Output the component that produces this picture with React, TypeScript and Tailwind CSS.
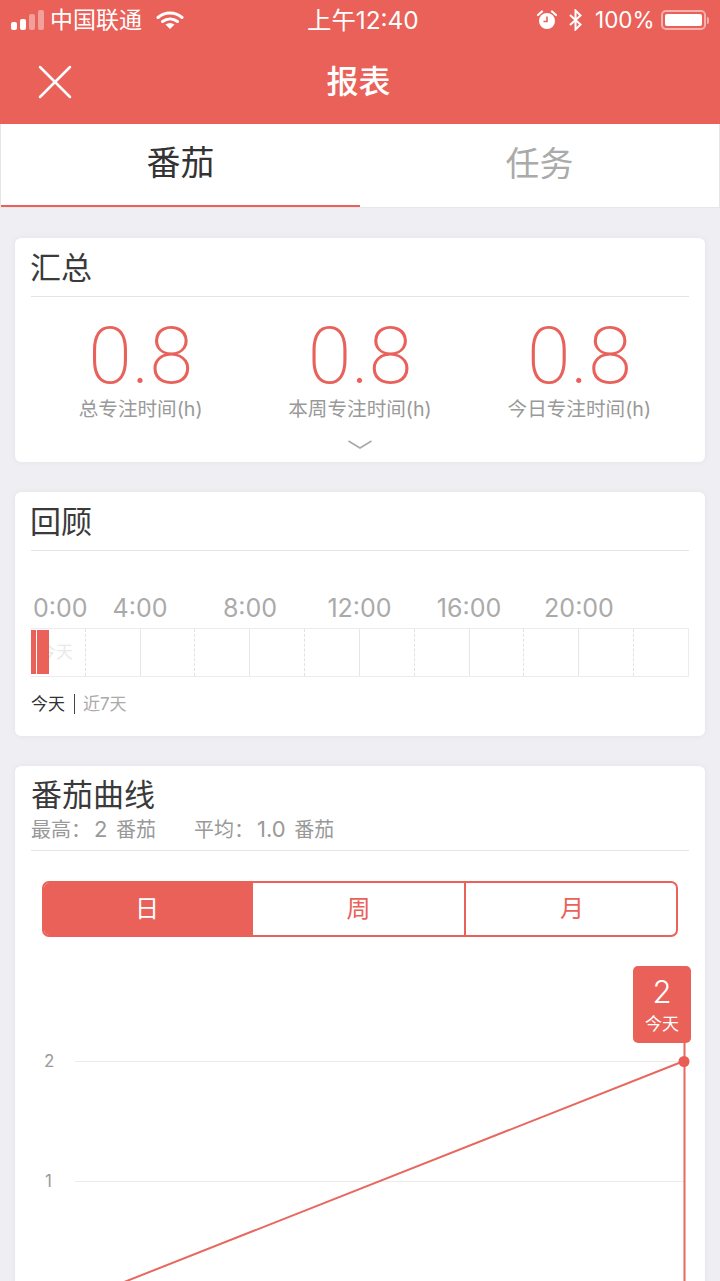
import { X } from "lucide-react";

const cjk = "font-['Inter','Noto_Sans_CJK_SC',sans-serif]";

function StatusBar() {
  return (
    <div className="flex h-[40px] items-center text-white">
      <div className="ml-[11px] flex h-[20px] items-end gap-[3px] mt-[-1px]">
        <div className="h-[8px] w-[6px] rounded-[2px] bg-white" />
        <div className="h-[11px] w-[6px] rounded-[2px] bg-white" />
        <div className="h-[16px] w-[6px] rounded-[2px] bg-white/40" />
        <div className="h-[20px] w-[6px] rounded-[2px] bg-white/40" />
      </div>
      <span className="ml-[6px] text-[23px] leading-none">中国联通</span>
      <svg className="ml-[14px]" width="28" height="20" viewBox="0 0 28 20" fill="none">
        <path d="M2 7.5C9 1.5 19 1.5 26 7.5" stroke="#fff" strokeWidth="3" strokeLinecap="round" />
        <path d="M6.5 11.5C11 8 17 8 21.5 11.5" stroke="#fff" strokeWidth="3" strokeLinecap="round" />
        <path d="M9.5 14.5C12.5 12.5 15.5 12.5 18.5 14.5L14 19Z" fill="#fff" />
      </svg>
      <span className="ml-[123px] w-[111px] text-[24.4px] leading-none whitespace-nowrap">上午12:40</span>
      <svg className="ml-[119px]" width="20" height="20" viewBox="0 0 20 20" fill="none">
        <circle cx="10" cy="11" r="8" fill="#fff" />
        <path d="M10 6.5V11.5H6.5" stroke="#ea6159" strokeWidth="1.6" />
        <path d="M1 5L5 1.5M19 5L15 1.5" stroke="#fff" strokeWidth="2.2" strokeLinecap="round" />
      </svg>
      <svg className="ml-[11px]" width="15" height="22" viewBox="0 0 15 22" fill="none">
        <path d="M2 6L12.5 15.5L7.5 20.5V1.5L12.5 6.5L2 16" stroke="#fff" strokeWidth="2" />
      </svg>
      <span className="ml-[12px] text-[22.5px] leading-none">100%</span>
      <div className="ml-[6px] flex h-[20px] w-[45px] items-center rounded-[5px] border-2 border-white/50 p-[2px]">
        <div className="h-full w-full rounded-[2px] bg-white" />
      </div>
      <div className="ml-[1px] h-[7px] w-[2px] rounded-r-full bg-white/50" />
    </div>
  );
}

function CardTitle({ title }: { title: string }) {
  return (
    <div className="flex h-[59px] items-center border-b border-[#e4e4e6] text-[31px] leading-none text-[#3a3a3a]">
      <span className="ml-[-1px]">{title}</span>
    </div>
  );
}

function Card({ children }: { children: React.ReactNode }) {
  return (
    <div className="mx-[15px] rounded-[6px] bg-white px-[16px] shadow-[0_0_6px_rgba(0,0,0,0.05)]">
      {children}
    </div>
  );
}

function Stat({ label }: { label: string }) {
  return (
    <div className="flex flex-col items-center">
      <div className="font-['Roboto'] text-[79px] leading-[70px] font-extralight text-[#e8625b]">0.8</div>
      <div className="mt-[5px] text-[19.6px] leading-[26px] text-[#999999]">{label}</div>
    </div>
  );
}

const cells = ["dashed", "solid", "dashed", "solid", "dashed", "solid", "dashed", "solid", "dashed", "solid", "dashed", "none"];

function Timeline() {
  return (
    <div className="relative mt-[5px] flex h-[49px] border border-l-0 border-[#ececec]">
      {cells.map((c, i) => (
        <div
          key={i}
          className={
            c === "dashed"
              ? "flex-1 border-r border-dashed border-[#e2e2e2]"
              : c === "solid"
                ? "flex-1 border-r border-[#e6e6e6]"
                : "flex-1"
          }
        />
      ))}
      <span className="absolute top-[13px] left-[8px] text-[17px] leading-[20px] text-[#e9e9e9]">今天</span>
      <div className="absolute top-[1px] left-0 h-[44px] w-[5px] bg-[#ea6159]" />
      <div className="absolute top-[1px] left-[6px] h-[44px] w-[12px] bg-[#ea6159]" />
    </div>
  );
}

function Chart() {
  return (
    <div className="relative mx-[-16px] mt-[14px] h-[360px]">
      <svg className="absolute top-0 left-0" width="690" height="360" viewBox="0 0 690 360" fill="none">
        <path d="M60 110.5H669M60 230.5H669" stroke="#ececec" />
        <path d="M61 350L669 110" stroke="#e8675f" strokeWidth="2" />
        <path d="M669.5 85V360" stroke="#e8675f" strokeWidth="2" />
        <circle cx="669" cy="110.5" r="5.5" fill="#ea5d55" />
        <text x="29" y="116" fontSize="17" fill="#9a9a9a">2</text>
        <text x="30" y="236" fontSize="17" fill="#9a9a9a">1</text>
      </svg>
      <div className="absolute top-[15px] left-[618px] flex h-[77px] w-[58px] flex-col items-center rounded-[5px] bg-[#ea6159] text-white">
        <span className="mt-[8px] text-[31px] leading-[36px] font-light">2</span>
        <span className="mt-[3px] text-[17px] leading-[22px]">今天</span>
      </div>
    </div>
  );
}

export default function App() {
  return (
    <div className={`h-[1281px] overflow-hidden bg-[#eeeef3] ${cjk}`}>
      <div className="h-[124px] bg-[#ea6159]">
        <StatusBar />
        <div className="grid h-[83px] grid-cols-3 items-center">
          <X className="ml-[25px] text-white" size={60} strokeWidth={1} />
          <span className="pr-[3px] text-center text-[32px] leading-none font-medium text-white">报表</span>
        </div>
      </div>

      <div className="flex h-[84px] border-x border-b border-[#e6e6e8] bg-white">
        <div className="flex flex-1 items-center justify-center border-b-2 border-[#ea6159] pb-[4px] text-[34px] leading-none text-[#333333]">
          番茄
        </div>
        <div className="flex flex-1 items-center justify-center pb-[4px] text-[34px] leading-none text-[#aaaaaa]">
          任务
        </div>
      </div>

      <div className="mt-[30px] flex flex-col gap-[30px]">
        <Card>
          <CardTitle title="汇总" />
          <div className="grid grid-cols-3 pt-[24px]">
            <Stat label="总专注时间(h)" />
            <Stat label="本周专注时间(h)" />
            <Stat label="今日专注时间(h)" />
          </div>
          <div className="flex h-[40px] items-center justify-center">
            <svg className="mt-[5px]" width="26" height="12" viewBox="0 0 26 12" fill="none">
              <path d="M1.5 2L13 9L24.5 2" stroke="#a8a8a8" strokeWidth="1.5" />
            </svg>
          </div>
        </Card>

        <Card>
          <CardTitle title="回顾" />
          <div className="mt-[42px] flex h-[30px] items-center text-[25px] leading-none whitespace-nowrap text-[#aaaaaa]">
            <span className="w-[54px] pl-[2px]">0:00</span>
            <span className="w-[110px] text-center">4:00</span>
            <span className="w-[110px] text-center">8:00</span>
            <span className="w-[109px] text-center">12:00</span>
            <span className="w-[110px] text-center">16:00</span>
            <span className="w-[110px] text-center">20:00</span>
          </div>
          <Timeline />
          <div className="flex h-[59px] items-center pb-[5px] text-[17px] leading-none">
            <span className="text-[#333333]">今天</span>
            <div className="mr-[8px] ml-[9px] h-[20px] w-px bg-[#444444]" />
            <span className="text-[#aaaaaa]">近7天</span>
          </div>
        </Card>

        <Card>
          <div className="border-b border-[#e4e4e6] pt-[14px] pb-[9px]">
            <div className="text-[31px] leading-[30px] text-[#3a3a3a]">番茄曲线</div>
            <div className="mt-[7px] flex h-[24px] items-center text-[20px] leading-none whitespace-nowrap text-[#999999]">
              <span className="w-[163px]">
                最高：<span className="mr-[3px] ml-[3px] text-[22px] leading-none">2</span> 番茄
              </span>
              <span>
                平均：<span className="mr-[3px] ml-[3px] text-[22px] leading-none">1.0</span> 番茄
              </span>
            </div>
          </div>
          <div className="mx-[11px] mt-[30px] flex h-[56px] overflow-hidden rounded-[7px] border-2 border-[#ea6159] text-[24px] leading-none">
            <div className="flex w-[209px] items-center justify-center bg-[#ea6159] pr-[3px] text-white">日</div>
            <div className="flex w-[213px] items-center justify-center border-r-2 border-[#ea6159] text-[#ea6159]">周</div>
            <div className="flex flex-1 items-center justify-center pl-[2px] text-[#ea6159]">月</div>
          </div>
          <Chart />
        </Card>
      </div>
    </div>
  );
}
